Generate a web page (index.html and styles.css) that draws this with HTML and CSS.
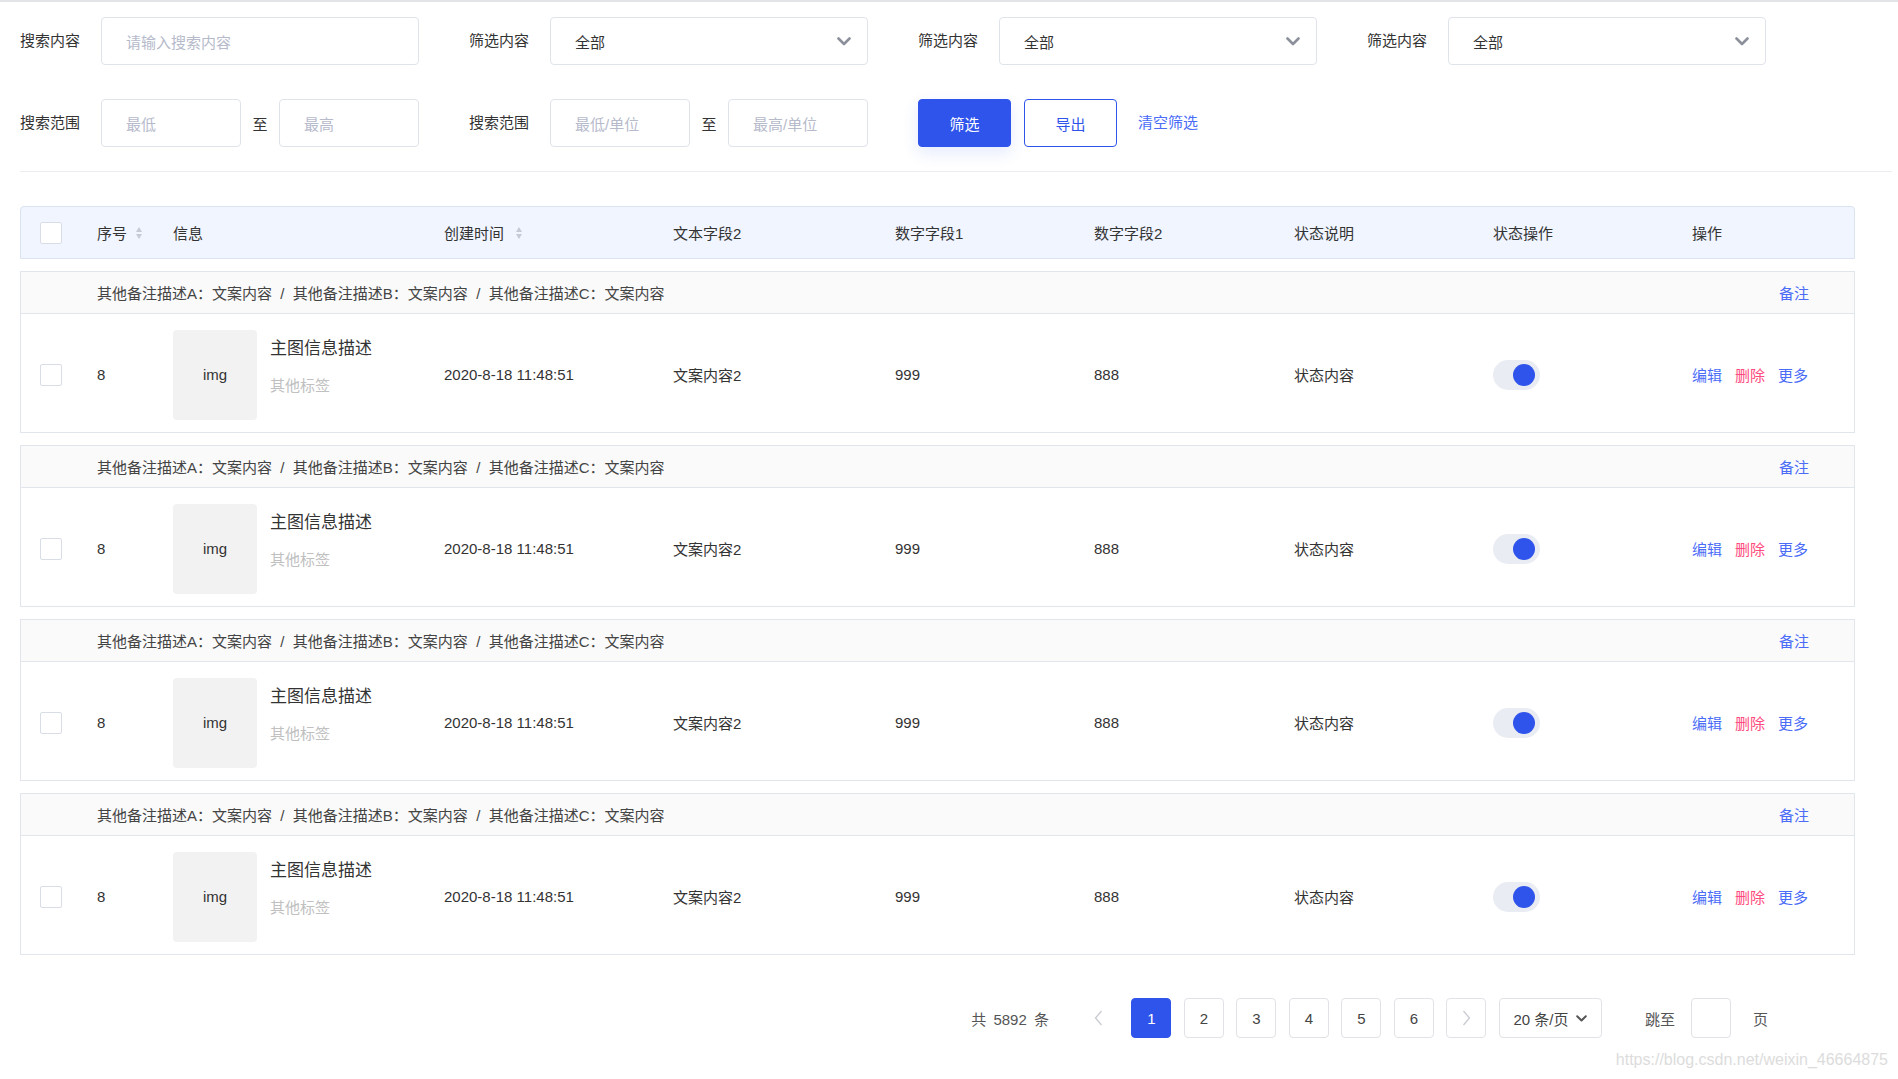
FILE: index.html
```html
<!DOCTYPE html>
<html lang="zh-CN">
<head>
<meta charset="utf-8">
<title>列表</title>
<link rel="stylesheet" href="styles.css">
</head>
<body>
<div class="page">
  <section class="filters">
    <div class="frow">
      <div class="field">
        <span class="flabel">搜索内容</span>
        <div class="input wide"><span class="ph">请输入搜索内容</span></div>
      </div>
      <div class="field">
        <span class="flabel">筛选内容</span>
        <div class="input wide select"><span class="val">全部</span><svg class="chev" width="14" height="9" viewBox="0 0 14 9"><path d="M1.5 1.5 L7 7 L12.5 1.5" fill="none" stroke="#8c909a" stroke-width="2.6" stroke-linecap="round" stroke-linejoin="round"/></svg></div>
      </div>
      <div class="field">
        <span class="flabel">筛选内容</span>
        <div class="input wide select"><span class="val">全部</span><svg class="chev" width="14" height="9" viewBox="0 0 14 9"><path d="M1.5 1.5 L7 7 L12.5 1.5" fill="none" stroke="#8c909a" stroke-width="2.6" stroke-linecap="round" stroke-linejoin="round"/></svg></div>
      </div>
      <div class="field">
        <span class="flabel">筛选内容</span>
        <div class="input wide select"><span class="val">全部</span><svg class="chev" width="14" height="9" viewBox="0 0 14 9"><path d="M1.5 1.5 L7 7 L12.5 1.5" fill="none" stroke="#8c909a" stroke-width="2.6" stroke-linecap="round" stroke-linejoin="round"/></svg></div>
      </div>
    </div>
    <div class="frow">
      <div class="field">
        <span class="flabel">搜索范围</span>
        <div class="range">
          <div class="input half"><span class="ph">最低</span></div>
          <span class="to">至</span>
          <div class="input half"><span class="ph">最高</span></div>
        </div>
      </div>
      <div class="field">
        <span class="flabel">搜索范围</span>
        <div class="range">
          <div class="input half"><span class="ph">最低/单位</span></div>
          <span class="to">至</span>
          <div class="input half"><span class="ph">最高/单位</span></div>
        </div>
      </div>
      <div class="actions">
        <button class="btn primary">筛选</button>
        <button class="btn ghost">导出</button>
        <a class="link clear">清空筛选</a>
      </div>
    </div>
  </section>

  <section class="table">
    <div class="thead grid">
      <div><span class="cb"></span></div>
      <div class="sortable">序号<span class="sort s1"><i class="up"></i><i class="down"></i></span></div>
      <div>信息</div>
      <div class="sortable">创建时间<span class="sort s2"><i class="up"></i><i class="down"></i></span></div>
      <div>文本字段2</div>
      <div>数字字段1</div>
      <div>数字字段2</div>
      <div>状态说明</div>
      <div>状态操作</div>
      <div>操作</div>
    </div>

    <div class="group">
      <div class="note"><span>其他备注描述A：文案内容 &nbsp;/&nbsp; 其他备注描述B：文案内容 &nbsp;/&nbsp; 其他备注描述C：文案内容</span><a class="link">备注</a></div>
      <div class="row grid">
        <div><span class="cb"></span></div>
        <div>8</div>
        <div class="info"><div class="img">img</div><div class="itext"><div class="title">主图信息描述</div><div class="tag">其他标签</div></div></div>
        <div>2020-8-18 11:48:51</div>
        <div>文案内容2</div>
        <div>999</div>
        <div>888</div>
        <div>状态内容</div>
        <div><span class="switch"><span class="knob"></span></span></div>
        <div class="ops"><a class="link">编辑</a><a class="link danger">删除</a><a class="link">更多</a></div>
      </div>
    </div>

    <div class="group">
      <div class="note"><span>其他备注描述A：文案内容 &nbsp;/&nbsp; 其他备注描述B：文案内容 &nbsp;/&nbsp; 其他备注描述C：文案内容</span><a class="link">备注</a></div>
      <div class="row grid">
        <div><span class="cb"></span></div>
        <div>8</div>
        <div class="info"><div class="img">img</div><div class="itext"><div class="title">主图信息描述</div><div class="tag">其他标签</div></div></div>
        <div>2020-8-18 11:48:51</div>
        <div>文案内容2</div>
        <div>999</div>
        <div>888</div>
        <div>状态内容</div>
        <div><span class="switch"><span class="knob"></span></span></div>
        <div class="ops"><a class="link">编辑</a><a class="link danger">删除</a><a class="link">更多</a></div>
      </div>
    </div>

    <div class="group">
      <div class="note"><span>其他备注描述A：文案内容 &nbsp;/&nbsp; 其他备注描述B：文案内容 &nbsp;/&nbsp; 其他备注描述C：文案内容</span><a class="link">备注</a></div>
      <div class="row grid">
        <div><span class="cb"></span></div>
        <div>8</div>
        <div class="info"><div class="img">img</div><div class="itext"><div class="title">主图信息描述</div><div class="tag">其他标签</div></div></div>
        <div>2020-8-18 11:48:51</div>
        <div>文案内容2</div>
        <div>999</div>
        <div>888</div>
        <div>状态内容</div>
        <div><span class="switch"><span class="knob"></span></span></div>
        <div class="ops"><a class="link">编辑</a><a class="link danger">删除</a><a class="link">更多</a></div>
      </div>
    </div>

    <div class="group">
      <div class="note"><span>其他备注描述A：文案内容 &nbsp;/&nbsp; 其他备注描述B：文案内容 &nbsp;/&nbsp; 其他备注描述C：文案内容</span><a class="link">备注</a></div>
      <div class="row grid">
        <div><span class="cb"></span></div>
        <div>8</div>
        <div class="info"><div class="img">img</div><div class="itext"><div class="title">主图信息描述</div><div class="tag">其他标签</div></div></div>
        <div>2020-8-18 11:48:51</div>
        <div>文案内容2</div>
        <div>999</div>
        <div>888</div>
        <div>状态内容</div>
        <div><span class="switch"><span class="knob"></span></span></div>
        <div class="ops"><a class="link">编辑</a><a class="link danger">删除</a><a class="link">更多</a></div>
      </div>
    </div>
  </section>

  <nav class="pager">
    <span class="total">共 5892 条</span>
    <span class="pbtn arrow off"><svg width="9" height="16" viewBox="0 0 9 16"><path d="M7.5 1 L1.5 8 L7.5 15" fill="none" stroke="#c8cbd2" stroke-width="1.3"/></svg></span>
    <span class="pbtn active">1</span>
    <span class="pbtn">2</span>
    <span class="pbtn">3</span>
    <span class="pbtn">4</span>
    <span class="pbtn">5</span>
    <span class="pbtn">6</span>
    <span class="pbtn arrow"><svg width="9" height="16" viewBox="0 0 9 16"><path d="M1.5 1 L7.5 8 L1.5 15" fill="none" stroke="#c8cbd2" stroke-width="1.3"/></svg></span>
    <span class="psize">20 条/页<svg width="11" height="7" viewBox="0 0 11 7"><path d="M1.2 1.2 L5.5 5.5 L9.8 1.2" fill="none" stroke="#555" stroke-width="2" stroke-linecap="round" stroke-linejoin="round"/></svg></span>
    <span class="jump">跳至</span>
    <span class="pbtn jinput"></span>
    <span class="pageword">页</span>
  </nav>
  <div class="watermark">https://blog.csdn.net/weixin_46664875</div>
</div>
</body>
</html>
```

FILE: styles.css
```css
* { box-sizing: border-box; }
html, body { margin: 0; padding: 0; background: #fff; }
body {
  font-family: "Liberation Sans", "Noto Sans CJK SC", sans-serif;
  font-size: 15px;
  color: #333;
  width: 1898px;
  height: 1079px;
  overflow: hidden;
}
.page {
  border-top: 2px solid #e2e4e8;
  padding: 0 6px 0 20px;
  position: relative;
  height: 1079px;
}
/* filters */
.filters {
  padding-top: 15px;
  padding-bottom: 24px;
  border-bottom: 1px solid #eaecf0;
}
.frow {
  display: flex;
  align-items: center;
  gap: 50px;
  height: 48px;
}
.frow + .frow { margin-top: 34px; }
.field { display: flex; align-items: center; }
.flabel { width: 60px; margin-right: 21px; color: #333; line-height: 20px; white-space: nowrap; }
.input {
  height: 48px;
  border: 1px solid #dfe3ea;
  border-radius: 4px;
  display: flex;
  align-items: center;
  padding-left: 24px;
  background: #fff;
}
.input.wide { width: 318px; }
.input.half { width: 140px; }
.ph { color: #b6bacb; }
.val { color: #333; }
.select { justify-content: space-between; padding-right: 16px; }
.range { display: flex; align-items: center; width: 318px; }
.to { width: 15px; margin: 0 11.5px; color: #333; }
.actions { display: flex; align-items: center; }
.btn {
  width: 93px;
  height: 48px;
  border-radius: 4px;
  font-family: inherit;
  font-size: 15px;
  cursor: pointer;
}
.btn.primary {
  background: #2f54eb;
  border: 1px solid #2f54eb;
  color: #fff;
  box-shadow: 0 6px 16px rgba(47, 84, 235, 0.12);
}
.btn.ghost {
  background: #fff;
  border: 1px solid #2f54eb;
  color: #2f54eb;
  margin-left: 13px;
}
.link { color: #4a6cf7; text-decoration: none; cursor: pointer; }
.link.danger { color: #ff4b7e; }
.clear { margin-left: 21px; margin-top: -4px; }

/* table */
.table { width: 1835px; margin-top: 34px; }
.grid {
  display: grid;
  grid-template-columns: 57px 76px 271px 229px 222px 199px 200px 199px 199px 1fr;
  align-items: center;
  padding-left: 19px;
}
.thead {
  height: 53px;
  background: #f0f5ff;
  border: 1px solid #dbe3f1;
  border-radius: 4px 4px 0 0;
  color: #333;
}
.cb {
  display: block;
  width: 22px;
  height: 22px;
  border: 1px solid #d9dde5;
  border-radius: 2px;
  background: #fff;
}
.sortable { display: flex; align-items: center; }
.sort { display: inline-flex; flex-direction: column; gap: 2px; }
.sort.s1 { margin-left: 9px; }
.sort.s2 { margin-left: 12px; }
.sort i { display: block; width: 0; height: 0; border-left: 3.5px solid transparent; border-right: 3.5px solid transparent; }
.sort .up { border-bottom: 5px solid #c6cad3; }
.sort .down { border-top: 5px solid #c6cad3; }

.group {
  margin-top: 12px;
  border: 1px solid #e1e5ec;
  height: 162px;
}
.note {
  height: 42px;
  background: #fafafa;
  border-bottom: 1px solid #e1e5ec;
  display: flex;
  align-items: center;
  justify-content: space-between;
  padding: 0 45px 0 76px;
  color: #444;
}
.row { height: 118px; padding-left: 19px; padding-top: 3px; }
.row > div { color: #333; }
.info { display: flex; align-items: flex-start; }
.img {
  width: 84px;
  height: 90px;
  background: #f2f2f2;
  border-radius: 4px;
  display: flex;
  align-items: center;
  justify-content: center;
  color: #333;
  font-size: 15px;
}
.itext { margin-left: 13px; padding-top: 7px; }
.title { font-size: 17px; line-height: 24px; color: #333; }
.tag { margin-top: 15px; line-height: 20px; color: #c0c0c0; }
.switch {
  display: flex;
  align-items: center;
  justify-content: flex-end;
  width: 47px;
  height: 30px;
  border-radius: 15px;
  background: #e9ecf2;
  padding-right: 5px;
}
.knob { width: 22px; height: 22px; border-radius: 50%; background: #2f54eb; }
.ops { display: flex; gap: 13px; }

/* pager */
.pager {
  width: 1835px;
  margin-top: 43px;
  display: flex;
  align-items: center;
  justify-content: flex-end;
  padding-right: 87px;
  color: #555;
}
.total { margin-right: 30px; color: #555; word-spacing: 3px; }
.pbtn {
  width: 40px;
  height: 40px;
  border: 1px solid #e0e2e7;
  border-radius: 4px;
  display: flex;
  align-items: center;
  justify-content: center;
  margin-right: 12.5px;
  color: #444;
  background: #fff;
}
.pbtn.arrow.off { border-color: transparent; }
.pbtn.active { background: #2f54eb; border-color: #2f54eb; color: #fff; }
.psize {
  width: 103px;
  height: 40px;
  border: 1px solid #e0e2e7;
  border-radius: 4px;
  display: flex;
  align-items: center;
  justify-content: center;
  gap: 8px;
  color: #444;
  margin-right: 43px;
}
.jump { margin-right: 16px; color: #555; }
.jinput { margin-right: 22px; }
.pageword { color: #555; }
.watermark {
  position: absolute;
  right: 10px;
  bottom: 10px;
  font-size: 16px;
  color: #dcdcdc;
}
```
